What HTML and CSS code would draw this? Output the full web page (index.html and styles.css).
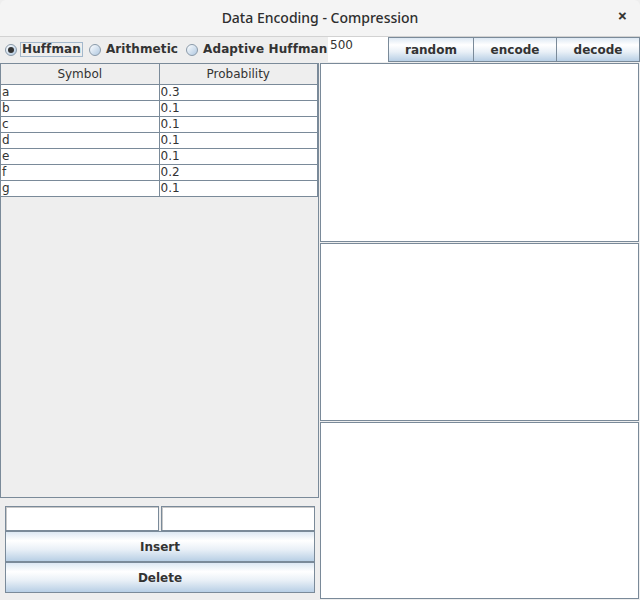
FILE: index.html
```html
<!DOCTYPE html>
<html>
<head>
<meta charset="utf-8">
<link rel="stylesheet" href="styles.css">
</head>
<body>
<div class="window">
  <div class="titlebar">
    <span class="title">Data Encoding - Compression</span>
    <span class="close">&#x2715;</span>
  </div>
  <div class="toolbar">
    <div class="radios">
      <label class="radio"><span class="dot checked"></span><span class="rlabel focus">Huffman</span></label>
      <label class="radio"><span class="dot"></span><span class="rlabel">Arithmetic</span></label>
      <label class="radio"><span class="dot"></span><span class="rlabel">Adaptive Huffman</span></label>
    </div>
    <div class="numfield">500</div>
    <div class="btn b-random">random</div>
    <div class="btn b-encode">encode</div>
    <div class="btn b-decode">decode</div>
  </div>
  <div class="main">
    <div class="left">
      <div class="scrollpane">
        <table class="grid">
          <thead><tr><th>Symbol</th><th>Probability</th></tr></thead>
          <tbody>
            <tr><td>a</td><td>0.3</td></tr>
            <tr><td>b</td><td>0.1</td></tr>
            <tr><td>c</td><td>0.1</td></tr>
            <tr><td>d</td><td>0.1</td></tr>
            <tr><td>e</td><td>0.1</td></tr>
            <tr><td>f</td><td>0.2</td></tr>
            <tr><td>g</td><td>0.1</td></tr>
          </tbody>
        </table>
      </div>
      <div class="inputs">
        <div class="field"></div>
        <div class="field"></div>
      </div>
      <div class="btn wide">Insert</div>
      <div class="btn wide">Delete</div>
    </div>
    <div class="right">
      <div class="panel p1"></div>
      <div class="panel p2"></div>
      <div class="panel p3"></div>
    </div>
  </div>
</div>
</body>
</html>
```

FILE: styles.css
```css
* { box-sizing: border-box; }
html, body { margin: 0; padding: 0; }
body {
  width: 640px;
  height: 600px;
  background: #eeeeee;
  font-family: "DejaVu Sans", sans-serif;
  font-size: 12px;
  color: #333333;
  overflow: hidden;
}
.window { width: 640px; height: 600px; display: flex; flex-direction: column; }
.titlebar {
  height: 37px;
  flex: none;
  background: #f4f4f4;
  border-bottom: 1px solid #d2d2d2;
  display: flex;
  align-items: center;
  justify-content: center;
  position: relative;
  border-radius: 6px 6px 0 0;
}
.title {
  font-family: "Noto Sans", "DejaVu Sans", sans-serif;
  font-size: 14px;
  font-weight: 500;
  color: #2e2e2e;
  margin-top: -1px;
}
.close {
  position: absolute;
  right: 13px;
  top: 10px;
  font-size: 11px;
  font-weight: bold;
  color: #2e2e2e;
  -webkit-text-stroke: 0.6px #2e2e2e;
}
.toolbar {
  height: 25px;
  flex: none;
  display: flex;
  align-items: stretch;
}
.toolbar > * { flex: none; }
.radios {
  width: 328px;
  display: flex;
  padding-left: 5px;
  overflow: hidden;
}
.radio {
  display: flex;
  align-items: center;
  font-weight: bold;
  font-size: 12px;
  color: #333;
  white-space: nowrap;
}
.dot {
  width: 12px;
  height: 12px;
  border-radius: 50%;
  border: 1px solid #8a9aa9;
  background: linear-gradient(135deg, #ffffff 0%, #dde8f3 40%, #b0c8e0 100%);
  position: relative;
  margin-right: 3px;
}
.dot.checked::after {
  content: "";
  position: absolute;
  left: 2px; top: 2px;
  width: 6px; height: 6px;
  border-radius: 50%;
  background: #333333;
}
.rlabel {
  padding: 0 1px;
  border: 1px solid transparent;
  line-height: 13px;
  height: 15px;
  margin-right: 6px;
  font-size: 12px;
  letter-spacing: 0.1px;
}
.rlabel.focus { border-color: #a3b8cc; }
.numfield {
  width: 60px;
  background: #ffffff;
  font-size: 12px;
  padding: 1px 0 0 2px;
  line-height: 14px;
}
.btn {
  border: 1px solid #7a8a99;
  background: linear-gradient(180deg, #dde8f3 0%, #ffffff 30%, #e9f0f7 60%, #b8cfe5 100%);
  font-weight: bold;
  font-size: 12px;
  color: #333333;
  display: flex;
  align-items: center;
  justify-content: center;
}
.b-random { width: 86px; }
.b-encode { width: 84px; margin-left: -1px; }
.b-decode { width: 84px; margin-left: -1px; }
.main {
  flex: 1;
  display: flex;
  padding-top: 1px;
}
.left {
  width: 320px;
  display: flex;
  flex-direction: column;
}
.scrollpane {
  width: 319px;
  height: 435px;
  flex: none;
  border: 1px solid #7a8a99;
  background: #eeeeee;
}
.grid {
  border-collapse: collapse;
  width: 317px;
  table-layout: fixed;
}
.grid th {
  height: 20px;
  font-weight: normal;
  font-size: 12px;
  color: #333;
  background: #eeeeee;
  border: 1px solid #7a8a99;
  border-top: none;
  padding: 0;
  text-align: center;
}
.grid th:first-child, .grid td:first-child { border-left: none; width: 158px; }
.grid td {
  height: 16px;
  background: #ffffff;
  border: 1px solid #7a8a99;
  padding: 0 0 0 1px;
  font-size: 12px;
  line-height: 14px;
  color: #333;
}
.inputs {
  display: flex;
  margin: 8px 0 0 5px;
  gap: 2px;
  flex: none;
}
.field {
  width: 154px;
  height: 25px;
  background: #ffffff;
  border: 1px solid #7a8a99;
  box-shadow: inset 1px 1px 0 #c8c8c8;
}
.btn.wide {
  margin-left: 5px;
  width: 310px;
  height: 31px;
  flex: none;
}
.right {
  width: 320px;
  display: flex;
  flex-direction: column;
  gap: 1px;
}
.panel {
  background: #ffffff;
  border: 1px solid #7a8a99;
  width: 319px;
}
.p1 { height: 179px; }
.p2 { height: 178px; }
.p3 { height: 177px; }
```
